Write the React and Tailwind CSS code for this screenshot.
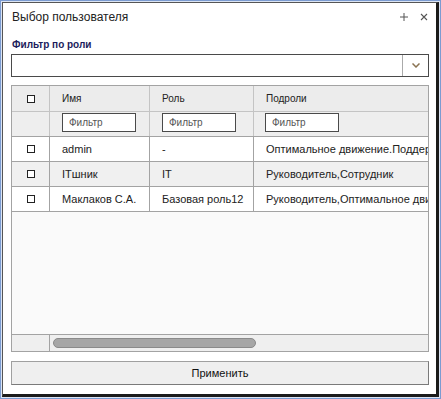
import React from "react";

const font = { fontFamily: '"Liberation Sans", Arial, sans-serif' };

const rows = [
  { name: "admin", role: "-", sub: "Оптимальное движение.Поддержка,Сотрудник", alt: false },
  { name: "ITшник", role: "IT", sub: "Руководитель,Сотрудник", alt: true },
  { name: "Маклаков С.А.", role: "Базовая роль12", sub: "Руководитель,Оптимальное движение", alt: false },
];

const Box = () => <span className="block w-[8px] h-[8px] border border-[#222] bg-white" />;

const FilterInput = () => (
  <div className="w-[74px] h-[19px] border border-[#4a4a4a] bg-white flex items-center pl-[6px] text-[10px] text-[#555]">
    Фильтр
  </div>
);

export default function App() {
  return (
    <div className="w-[441px] h-[399px] border border-[#7b9bd1] bg-[#dbe4f3] p-px" style={font}>
      <div className="h-full flex flex-col bg-white border-l border-t border-[#555] border-r-[3px] border-b-[3px] border-r-[#1a1a1a] border-b-[#1a1a1a] pl-[8px] pr-[7px]">
        {/* заголовок */}
        <div className="h-[28px] flex items-center pl-px">
          <span className="text-[12px] text-[#222]">Выбор пользователя</span>
          <div className="ml-auto flex items-center gap-[12px] pr-[1px]">
            <svg width="8" height="8" viewBox="0 0 8 8">
              <path d="M0 4h8M4 0v8" stroke="#555" strokeWidth="1" />
            </svg>
            <svg width="8" height="8" viewBox="0 0 8 8">
              <path d="M1 1l6 6M7 1l-6 6" stroke="#555" strokeWidth="1.1" />
            </svg>
          </div>
        </div>

        <div className="mt-[7px] h-[13px] flex items-center pl-px">
          <span className="text-[10px] font-bold text-[#1c1c5c]">Фильтр по роли</span>
        </div>

        {/* выбор роли */}
        <div className="mt-[3px] h-[23px] border border-[#4a4a4a] flex">
          <div className="flex-1" />
          <div className="w-[26px] border-l border-[#aaa] flex items-center justify-center">
            <svg width="8" height="5" viewBox="0 0 8 5">
              <path d="M0.5 0.5L4 4L7.5 0.5" fill="none" stroke="#8a7352" strokeWidth="1.5" />
            </svg>
          </div>
        </div>

        {/* таблица */}
        <div className="mt-[8px] h-[267px] border border-[#a3a3a3] flex flex-col overflow-hidden">
          <div className="h-[26px] shrink-0 flex border-b border-[#c4c4c4] bg-[#ececec] text-[10px] text-[#222]">
            <div className="w-[38px] shrink-0 border-r border-[#c4c4c4] flex items-center justify-center"><Box /></div>
            <div className="w-[100px] shrink-0 border-r border-[#c4c4c4] flex items-center pl-[12px]">Имя</div>
            <div className="w-[104px] shrink-0 border-r border-[#c4c4c4] flex items-center pl-[12px]">Роль</div>
            <div className="w-[220px] shrink-0 flex items-center pl-[12px]">Подроли</div>
          </div>
          <div className="h-[25px] shrink-0 flex border-b border-[#a3a3a3] bg-[#eeeeee]">
            <div className="w-[38px] shrink-0 border-r border-[#c4c4c4]" />
            <div className="w-[100px] shrink-0 border-r border-[#c4c4c4] pl-[12px] pt-px"><FilterInput /></div>
            <div className="w-[104px] shrink-0 border-r border-[#c4c4c4] pl-[12px] pt-px"><FilterInput /></div>
            <div className="w-[220px] shrink-0 pl-[11px] pt-px"><FilterInput /></div>
          </div>
          {rows.map((r) => (
            <div
              key={r.name}
              className={`h-[25px] shrink-0 flex border-b border-[#a3a3a3] text-[11px] text-[#222] whitespace-nowrap ${r.alt ? "bg-[#f0f0f0]" : "bg-white"}`}
            >
              <div className="w-[38px] shrink-0 border-r border-[#a3a3a3] flex items-center justify-center"><Box /></div>
              <div className="w-[100px] shrink-0 border-r border-[#a3a3a3] flex items-center pl-[12px]">{r.name}</div>
              <div className="w-[104px] shrink-0 border-r border-[#a3a3a3] flex items-center pl-[12px]">{r.role}</div>
              <div className="w-[220px] shrink-0 flex items-center pl-[12px] overflow-hidden">{r.sub}</div>
            </div>
          ))}
          <div className="flex-1 bg-[#fafafa]" />
          <div className="h-[17px] shrink-0 flex border-t border-[#a3a3a3] bg-[#efefef]">
            <div className="w-[38px] shrink-0 border-r border-[#a3a3a3]" />
            <div className="flex-1 flex items-center pl-[3px]">
              <div className="w-[203px] h-[10px] rounded-full bg-[#a6a6a6] border border-[#8a8a8a]" />
            </div>
          </div>
        </div>

        {/* кнопка */}
        <button className="mt-[9px] h-[24px] border border-[#a0a0a0] border-r-[#7a7a7a] border-b-[#7a7a7a] bg-[#efefef] text-[11px] text-[#111] flex items-center justify-center">
          Применить
        </button>
      </div>
    </div>
  );
}
